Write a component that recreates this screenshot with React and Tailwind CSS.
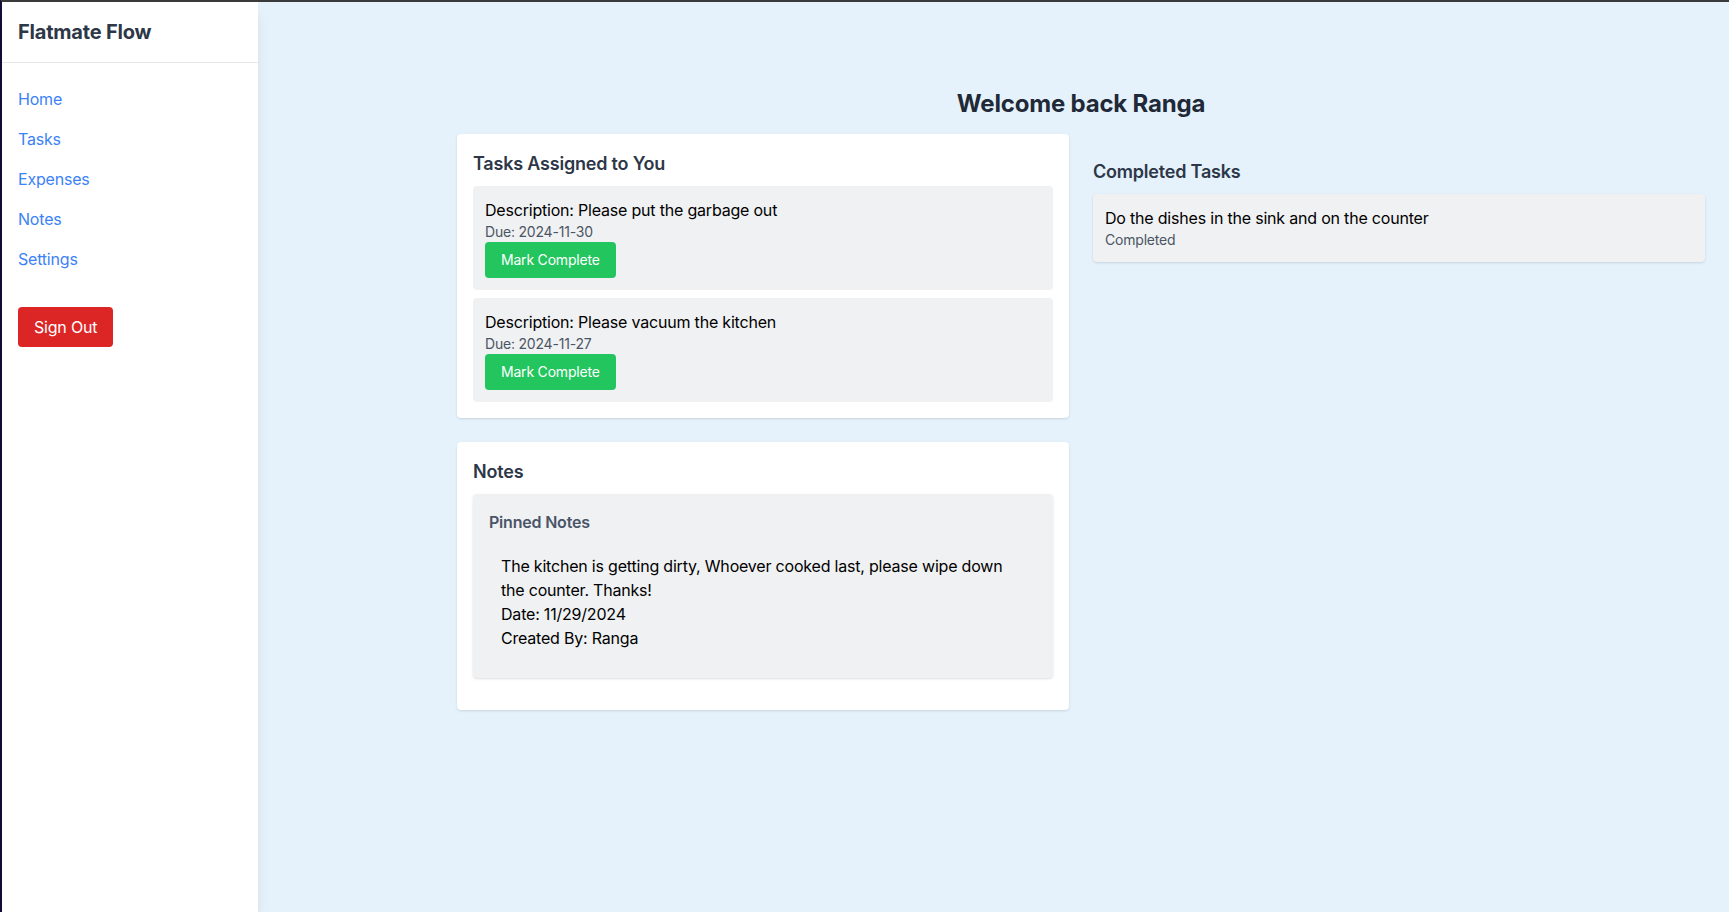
import React from "react";

const navLinks = ["Home", "Tasks", "Expenses", "Notes", "Settings"];

const tasks = [
  { id: 1, description: "Please put the garbage out", due: "2024-11-30" },
  { id: 2, description: "Please vacuum the kitchen", due: "2024-11-27" },
];

const Sidebar = () => (
  <aside className="relative z-10 flex w-64 shrink-0 flex-col bg-white shadow-lg">
    <div className="border-b border-[#e5e7eb] p-4">
      <h1 className="text-xl font-bold leading-7 text-[#2d3748]">Flatmate Flow</h1>
    </div>
    <nav className="p-4">
      <ul>
        {navLinks.map((link) => (
          <li key={link}>
            <a href="#" className="block py-2 text-base leading-6 text-[#3b82f6]">
              {link}
            </a>
          </li>
        ))}
      </ul>
      <button className="mt-7 rounded bg-[#dc2626] px-4 py-2 text-base leading-6 text-white">
        Sign Out
      </button>
    </nav>
  </aside>
);

const TaskCard = ({ task }) => (
  <div className="rounded bg-[#f0f1f3] p-3">
    <p className="text-base leading-6 text-black">Description: {task.description}</p>
    <p className="text-sm leading-5 text-[#4b5563]">Due: {task.due}</p>
    <button className="rounded bg-[#22c55e] px-4 py-2 text-sm leading-5 text-white">
      Mark Complete
    </button>
  </div>
);

const App = () => {
  return (
    <div
      className="flex min-h-[912px] border-l-2 border-t-2 border-l-[#150d3a] border-t-[#3a3a3a] bg-[#e5f2fc] tracking-[-0.2px]"
      style={{ fontFamily: "Inter, 'Noto Sans', sans-serif" }}
    >
      <Sidebar />

      <main className="flex-1 pr-6 pt-[86px]">
        <div className="ml-auto w-[1248px]">
          <h2 className="mb-[14px] text-center text-2xl font-bold leading-8 text-[#1f2937]">
            Welcome back Ranga
          </h2>

          <div className="grid grid-cols-2 gap-6">
            <div>
              <section className="rounded bg-white p-4 shadow">
                <h3 className="mb-2 text-lg font-semibold leading-7 text-[#2d3748]">
                  Tasks Assigned to You
                </h3>
                <div className="space-y-2">
                  {tasks.map((task) => (
                    <TaskCard key={task.id} task={task} />
                  ))}
                </div>
              </section>

              <section className="mt-6 rounded bg-white p-4 pb-8 shadow">
                <h3 className="mb-2 text-lg font-semibold leading-7 text-[#2d3748]">Notes</h3>
                <div className="rounded bg-[#f0f1f3] p-4 shadow-sm">
                  <h4 className="mb-2 text-base font-semibold leading-6 text-[#4a5568]">
                    Pinned Notes
                  </h4>
                  <div className="p-3 text-base leading-6 text-black">
                    <p>
                      The kitchen is getting dirty, Whoever cooked last, please wipe down the
                      counter. Thanks!
                    </p>
                    <p>Date: 11/29/2024</p>
                    <p>Created By: Ranga</p>
                  </div>
                </div>
              </section>
            </div>

            <section className="pt-6">
              <h3 className="mb-2 text-lg font-semibold leading-7 text-[#2d3748]">
                Completed Tasks
              </h3>
              <div className="rounded bg-[#f0f1f3] p-3 shadow">
                <p className="text-base leading-6 text-black">
                  Do the dishes in the sink and on the counter
                </p>
                <p className="text-sm leading-5 text-[#4b5563]">Completed</p>
              </div>
            </section>
          </div>
        </div>
      </main>
    </div>
  );
};

export default App;
